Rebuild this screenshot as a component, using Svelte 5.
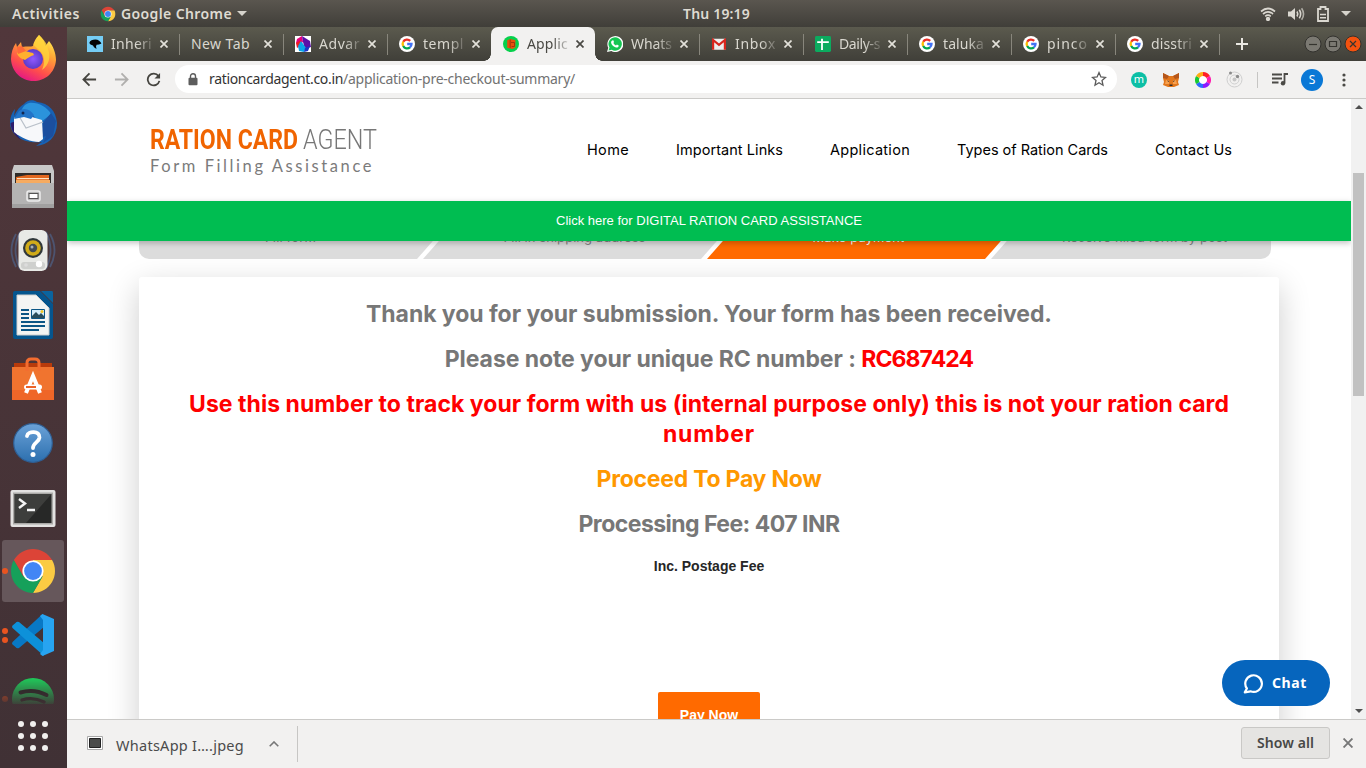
<script>
  // Sets a text to a fixed advance width, by tracking or by condensing its glyphs.
  function fit(node, opts) {
    const width = typeof opts === 'number' ? opts : opts.width;
    const natural = node.getBoundingClientRect().width;
    if (opts.condense) {
      node.style.transform = `scaleX(${width / natural})`;
      node.style.marginRight = `${width - natural}px`;
    } else {
      const count = node.textContent.trim().length;
      node.style.letterSpacing = `${(width - natural) / count}px`;
    }
  }

  const tabs = [
    { title: 'Inheri', icon: 'bird' },
    { title: 'New Tab', icon: null },
    { title: 'Advar', icon: 'prism' },
    { title: 'templ', icon: 'google' },
    { title: 'Applic', icon: 'ration', active: true },
    { title: 'Whats', icon: 'whatsapp' },
    { title: 'Inbox', icon: 'gmail' },
    { title: 'Daily-s', icon: 'sheet' },
    { title: 'taluka', icon: 'google' },
    { title: 'pinco', icon: 'google' },
    { title: 'disstri', icon: 'google' }
  ];

  const dock = [
    { name: 'firefox', dots: 0 },
    { name: 'thunderbird', dots: 0 },
    { name: 'files', dots: 0 },
    { name: 'rhythmbox', dots: 0 },
    { name: 'writer', dots: 0 },
    { name: 'software', dots: 0 },
    { name: 'help', dots: 0 },
    { name: 'terminal', dots: 0 },
    { name: 'chrome', dots: 1, active: true },
    { name: 'code', dots: 2 },
    { name: 'spotify', dots: 1 }
  ];

  const links = [
    { label: 'Home', width: 42 },
    { label: 'Important Links', width: 107 },
    { label: 'Application', width: 80 },
    { label: 'Types of Ration Cards', width: 151 },
    { label: 'Contact Us', width: 77 }
  ];

  const steps = [
    { label: 'Fill form', width: 51 },
    { label: 'Fill in shipping address', width: 142 },
    { label: 'Make payment', width: 92, current: true },
    { label: 'Receive filled form by post', width: 165 }
  ];
</script>

{#snippet chromeLogo()}
  <path fill="#fbcb43" d="M24 13H43.05A22 22 0 0 1 24 46L33.53 29.5L24 24Z" />
  <path fill="#16a05a" d="M24 46A22 22 0 0 1 4.95 13L14.47 29.5L24 24L33.53 29.5Z" />
  <path fill="#dc4437" d="M4.95 13A22 22 0 0 1 43.05 13H24V24L14.47 29.5Z" />
  <circle cx="24" cy="24" r="10.6" fill="#fff" />
  <circle cx="24" cy="24" r="8.9" fill="#4286f5" />
{/snippet}

{#snippet favicon(name)}
  <svg class="fav" viewBox="0 0 16 16">
    {#if name === 'google'}
      <circle cx="8" cy="8" r="8" fill="#fff" />
      <g fill="none" stroke-width="2.3">
        <path stroke="#ea2f25" d="M4.2 5.8A4.4 4.4 0 0 1 11.2 4.9" />
        <path stroke="#fbbc05" d="M4.2 10.1A4.6 4.6 0 0 1 4.2 5.8" />
        <path stroke="#00a650" d="M11 11.4A4.5 4.5 0 0 1 4.2 10" />
        <path stroke="#4272f5" d="M8.2 8H12.5A4.4 4.4 0 0 1 10.9 11.4" />
      </g>
    {:else if name === 'bird'}
      <path fill="#75cdf5" d="M0 0H16V16H0Z" />
      <path fill="#050505" d="M2.3 7C3 4.500 6 3.500 8.500 3.600C11 3.800 13.600 5.200 14.400 7.600L12 8.600L9.600 8.800L9 10.500L9.500 13L7 11.300L6 9.400L3.500 8.600Z" />
    {:else if name === 'prism'}
      <path fill="#fff" d="M0 0H16V16H0Z" />
      <path fill="#e6007e" d="M2 3L7 0L8 6L4 9L1 7Z" />
      <path fill="#5a0fa8" d="M7 0L15 5L16 11L10 13L8 6Z" />
      <path fill="#ec1c24" d="M1 7L6 4L5 10L2 12Z" />
      <path fill="#0aa4e8" d="M6 5L11 12L9 16L4 15L3 10Z" />
      <path fill="#1d35c6" d="M10 12L15 10L13 15L9 16Z" />
    {:else if name === 'ration'}
      <circle cx="8" cy="8" r="8" fill="#06d14c" />
      <path fill="#e8500d" d="M4.2 4.3L7.4 3L12.4 4.3V11.3L9.6 13.1L4.2 11.7Z" />
      <path fill="none" stroke="#8f320d" stroke-width=".8" d="M7.2 3.5V11.8M8 6.5H11.5V10.5H8.6" />
    {:else if name === 'whatsapp'}
      <path fill="#fff" d="M0 16L1.3 11.8A8 8 0 1 1 4.4 15Z" />
      <path fill="#16c653" d="M1.5 14.5L2.5 11.6A6.7 6.7 0 1 1 4.8 13.8Z" />
      <path fill="#fff" d="M5.1 4.4L6.3 4.3L7 6.1L6.4 7.1C7 8.3 7.8 9 9 9.6L9.9 8.6L11.7 9.5C11.7 11.3 10.1 12 8.4 11.3C6.3 10.5 4.5 8.7 4.1 6.7C4 5.7 4.4 4.8 5.1 4.4Z" />
    {:else if name === 'gmail'}
      <rect x="1" y="2.7" width="14" height="11" rx="1" fill="#eee" />
      <path fill="none" stroke="#d9251d" stroke-width="2.2" d="M2.1 13.7V4L8 8.9L13.9 4V13.7" />
    {:else if name === 'sheet'}
      <rect width="16" height="16" rx="1.4" fill="#0bab5f" />
      <path fill="none" stroke="#fff" stroke-width="1.8" d="M2.2 6.2H13.8M7 2.7V14" />
    {/if}
  </svg>
{/snippet}

{#snippet dockIcon(name)}
  <svg class="app" viewBox="0 0 48 48">
    {#if name === 'firefox'}
      <defs>
        <linearGradient id="ffBody" x1=".8" y1="0" x2=".3" y2="1">
          <stop offset="0" stop-color="#fff44f" /><stop offset=".35" stop-color="#ffa436" />
          <stop offset=".7" stop-color="#ff4f4b" /><stop offset="1" stop-color="#e31587" />
        </linearGradient>
        <radialGradient id="ffGlobe"><stop offset="0" stop-color="#9059ff" /><stop offset="1" stop-color="#5b3bc9" /></radialGradient>
      </defs>
      <path fill="url(#ffBody)" d="M30 0C34 4 36 7 36.500 11L40 6C44 11 47 18 47 25C46 38 36 46 24.500 46C12 46 2.500 36 2 24C2 18 4 12 7 8L8 12L12 7L13 12C18 11 22 12 24 11C25 6 27 3 30 0Z" />
      <circle cx="24" cy="24" r="10" fill="url(#ffGlobe)" />
      <path fill="#ffb02e" d="M8 18C13 14 19 17 24 18L25 20C21 21 19 23 16 25C13 24 9 22 8 18Z" />
      <path fill="#ff6a39" d="M8 12L13 11L17 16L9 19Z" />
      <path fill="#ffd43b" d="M30 0C35 5 38 8 39 14C42 22 40 30 33 35C36 28 36 23 32 17C27 12 24 10 24.500 9Z" opacity=".8" />
    {:else if name === 'thunderbird'}
      <path fill="#1762b4" d="M15 5C18 1 24 0 28 3C40 4 47 12 48 24C48 38 39 46 27 47L33 43C15 45 2 37 1 24C1 19 3 13 6 10L5 17C8 11 11 7 15 5Z" />
      <path fill="#2b93dc" d="M20 4C29 3 38 8 42 15L31 24L22 14L12 14C13 8 16 5 20 4Z" />
      <path fill="#1b4f9f" d="M34 24L42 14L47 22L44 37L34 44L37 37L31 39Z" />
      <path fill="#2b1c6b" d="M1.500 24L7 22V34L12 41C6 37 2 31 1.500 24Z" />
      <path fill="#f7f8fa" d="M5 19L13 15L33 21L34 40L30 43C22 43 12 39 5 33Z" />
      <path fill="none" stroke="#b9c0c9" stroke-width="1.200" d="M10 17L17 29L34 23" />
      <path fill="#2374c8" d="M10 12C15 8 21 10 25 16L22 20L15 18L5 20Z" />
      <circle cx="14" cy="14" r="1.500" fill="#132650" />
    {:else if name === 'files'}
      <path fill="#c8c8c8" d="M5 2H43L45 8V22H3V8Z" />
      <path fill="#302b29" d="M6 10H42V20H6Z" />
      <path fill="#e2671f" d="M7 14L18 12L40 12V20H7Z" />
      <path fill="#ffe2c0" d="M8 15H40V16.200H8Z" />
      <path fill="#f6ab61" d="M7 17H41V20H7Z" />
      <path fill="#b4b3b3" d="M3 20H45V45H3Z" />
      <path fill="#8e8e8e" d="M3 41H45V45H3Z" opacity=".5" />
      <rect x="18" y="28" width="13" height="10" rx="2" fill="#b9b9b9" stroke="#ededed" stroke-width="1.500" />
      <rect x="20" y="30.500" width="9" height="5" fill="#fff" stroke="#555" />
    {:else if name === 'rhythmbox'}
      <g fill="none" stroke="#4d5f83" stroke-width="1.800" opacity=".75">
        <path d="M7 7Q-2 23 7 40M11 5Q2 23 11 42M41 7Q50 23 41 40M37 5Q46 23 37 42" />
      </g>
      <rect x="9.500" y="3" width="29" height="41" rx="6" fill="#e8e9e6" />
      <rect x="12" y="35" width="24" height="7" rx="3" fill="#cfd0ce" />
      <circle cx="24" cy="21" r="10" fill="#30373a" />
      <circle cx="24" cy="21" r="7.800" fill="#d0ab19" />
      <circle cx="24" cy="21" r="4.200" fill="#434b51" />
      <circle cx="23" cy="20" r="1.500" fill="#a9b2b6" />
      <circle cx="30" cy="37" r="3.200" fill="#fff" />
      <circle cx="17" cy="38" r="1.800" fill="#dcdcdc" />
    {:else if name === 'writer'}
      <path fill="#05558e" d="M6 0H31L44 13V46Q44 48 42 48H6Q4 48 4 46V2Q4 0 6 0Z" />
      <path fill="#0a649f" d="M32 0H43Q44 0 44 2V12Z" />
      <path fill="#f4f4f3" stroke="#cfcfcf" stroke-width="1" d="M8 4H27L40 17V44H8Z" />
      <path stroke="#0c5585" stroke-width="2" d="M12 19H20M12 23H20M12 27H20M12 31H36M12 35H36M12 39H30" />
      <path fill="#d5edfb" stroke="#0c5585" d="M22.500 18.500H35.500V27.500H22.500Z" />
      <path fill="#294c5b" d="M23 27V25L27 21L30 24L32 22L35 25V27Z" />
      <circle cx="33" cy="20.500" r="1.500" fill="#f3c624" />
    {:else if name === 'software'}
      <path fill="#b83b0b" d="M5 8H43V14H5Z" />
      <path fill="#f0742f" d="M3 12H45V45H3Z" />
      <path fill="#ef6628" d="M3 35H45V45H3Z" />
      <path fill="none" stroke="#f36d30" stroke-width="3" d="M18 16V8Q18 4 22 4H26Q30 4 30 8V16" />
      <g fill="none" stroke="#fff" stroke-width="4"><path d="M17 38L24 21L31 38" /></g>
      <rect x="15" y="29.500" width="18" height="5" rx="2.500" fill="#fff" />
      <path stroke="#ec6328" stroke-width="2" d="M17 32H27" />
    {:else if name === 'help'}
      <defs><linearGradient id="helpBlue" x2="0" y2="1"><stop stop-color="#6ba2d8" /><stop offset="1" stop-color="#2c6fae" /></linearGradient></defs>
      <circle cx="24" cy="24" r="19.300" fill="url(#helpBlue)" stroke="#2f5f94" stroke-width="1.200" />
      <path fill="none" stroke="#fff" stroke-width="3.800" stroke-linecap="round" d="M18 17C19 11.500 31 11.500 30.500 18.500C30 23.500 24 23.500 24 29" />
      <circle cx="24" cy="35.500" r="2.500" fill="#fff" />
    {:else if name === 'terminal'}
      <rect x="1.500" y="7" width="45" height="37" rx="2" fill="#e3e2e1" />
      <rect x="4" y="9.500" width="40" height="32" fill="#aaa9a7" />
      <rect x="5.500" y="11" width="37" height="29" fill="#272827" />
      <path fill="#4c4d4b" d="M5.500 11H42.500L17 40H5.500Z" opacity=".6" />
      <path fill="none" stroke="#f4f4f4" stroke-width="2.400" d="M10 16L16 20.500L10 25M18 27H26" />
    {:else if name === 'chrome'}
      {@render chromeLogo()}
    {:else if name === 'code'}
      <path fill="#0878c5" d="M3.500 31L33.500 3L35 16L10 37Q8 38 6.500 36L3.500 33.500Q2.500 32.500 3.500 31Z" />
      <path fill="#0d91d9" d="M3.500 17L35 45V32L10 11Q8 10 6.500 12L3.500 14.500Q2.500 15.500 3.500 17Z" />
      <path fill="#27a4f1" d="M33.500 3L45 8V40L33.500 45L31 43L34 39V9L31 5Z" />
    {:else if name === 'spotify'}
      <circle cx="24" cy="24" r="21" fill="#1ed05c" />
      <g fill="none" stroke="#252425" stroke-linecap="round">
        <path stroke-width="4" d="M11.500 17.500Q25 13.500 37.500 20" />
        <path stroke-width="3.300" d="M13 25Q24 21.500 35 27" />
      </g>
    {/if}
  </svg>
{/snippet}

<div class="desktop">
  <div class="topbar">
    <span class="activities"><span use:fit={68}>Activities</span></span>
    <span class="appmenu">
      <svg viewBox="0 0 48 48" width="16" height="16">{@render chromeLogo()}</svg>
      <span use:fit={111}>Google Chrome</span>
      <svg width="10" height="5" viewBox="0 0 10 5"><path fill="#d6d3cc" d="M0 0H10L5 5Z" /></svg>
    </span>
    <span class="clock"><span use:fit={67}>Thu 19:19</span></span>
    <span class="status">
      <svg width="16" height="14" viewBox="0 0 16 14" fill="none" stroke="#dad7d0" stroke-width="1.700">
        <path d="M1 4.500Q8-1.500 15 4.500" /><path d="M3 7Q8 2.700 13 7" /><path d="M5.200 9.300Q8 7 10.800 9.300" />
        <circle cx="8" cy="12" r="1.300" fill="#dad7d0" />
      </svg>
      <svg width="17" height="14" viewBox="0 0 17 14" fill="none" stroke="#dad7d0" stroke-width="1.600">
        <path fill="#dad7d0" stroke="none" d="M0 4.500H3L7 1V13L3 9.500H0Z" />
        <path d="M9 4.500Q10.500 7 9 9.500M11.300 2.800Q14 7 11.300 11.200" /><path opacity=".7" d="M13.600 1.200Q17.500 7 13.600 12.800" />
      </svg>
      <svg width="12" height="16" viewBox="0 0 12 16" fill="none" stroke="#dad7d0" stroke-width="1.800">
        <path d="M1 3H3.500V1H8.500V3H11V15H1Z" /><path stroke-width="1.500" d="M3 8.500H9M3 11.800H9" />
      </svg>
      <svg width="10" height="5" viewBox="0 0 10 5"><path fill="#d6d3cc" d="M0 0H10L5 5Z" /></svg>
    </span>
  </div>

  <div class="workspace">
    <div class="dock">
      <div class="apps">
        {#each dock as item}
          <div class="slot" class:active={item.active}>
            <div class="dots">
              {#each { length: item.dots } as _}<i></i>{/each}
            </div>
            {@render dockIcon(item.name)}
          </div>
        {/each}
      </div>
      <div class="launcher">
        {#each { length: 9 } as _}<i></i>{/each}
      </div>
    </div>

    <div class="browser">
      <div class="tabstrip">
        {#each tabs as tab}
          <div class="tab" class:active={tab.active}>
            {#if tab.icon}{@render favicon(tab.icon)}{/if}
            <span class="title" class:plain={!tab.icon}><span use:fit={tab.icon ? 41 : 59}>{tab.title}</span></span>
            <svg class="close" viewBox="0 0 8 8"><path d="M.5.5L7.500 7.500M7.500.5L.5 7.500" /></svg>
          </div>
        {/each}
        <div class="newtab">
          <svg width="12" height="12" viewBox="0 0 12 12"><path stroke="#e9e7e1" stroke-width="2" d="M0 6H12M6 0V12" /></svg>
        </div>
        <div class="controls">
          <svg viewBox="0 0 18 18"><circle cx="9" cy="9" r="8" /><path d="M5 9.500H13" /></svg>
          <svg viewBox="0 0 18 18"><circle cx="9" cy="9" r="8" /><path d="M5.500 6.500H12.500V11.500H5.500Z" /></svg>
          <svg class="quit" viewBox="0 0 18 18"><circle cx="9" cy="9" r="8" /><path d="M6 6L12 12M12 6L6 12" /></svg>
        </div>
      </div>

      <div class="toolbar">
        <div class="navbtns">
          <svg viewBox="0 0 16 16"><path d="M15 8H2M8 1.500L1.500 8L8 14.500" /></svg>
          <svg class="off" viewBox="0 0 16 16"><path d="M1 8H14M8 1.500L14.500 8L8 14.500" /></svg>
          <svg viewBox="0 0 16 16"><path d="M13.300 4.300A6.300 6.300 0 1 0 14.300 9.500" /><path fill="#45443f" stroke="none" d="M15 1V7H9Z" /></svg>
        </div>
        <div class="omnibox">
          <svg width="10" height="13" viewBox="0 0 10 13"><path fill="none" stroke="#5d5d5d" stroke-width="1.400" d="M2.500 5V3.200A2.500 2.500 0 0 1 7.500 3.200V5" /><rect x=".5" y="4.700" width="9" height="7.500" rx="1" fill="#5d5d5d" /></svg>
          <span class="url"><b use:fit={134}>rationcardagent.co.in</b><span use:fit={232}>/application-pre-checkout-summary/</span></span>
          <svg class="star" width="16" height="16" viewBox="0 0 16 16"><path fill="none" stroke="#5b5b5b" stroke-width="1.300" d="M8 1.600L9.900 6L14.500 6.400L11 9.500L12 14.200L8 11.700L4 14.200L5 9.500L1.500 6.400L6.100 6Z" /></svg>
        </div>
        <div class="extensions">
          <span class="mbadge">m</span>
          <svg width="18" height="16" viewBox="0 0 18 16">
            <path fill="#e2761b" d="M1 1L7 4H11L17 1V6L16 10L17 13L12 15H6L1 13L2 10L1 6Z" />
            <path fill="#b5561a" d="M1 1L7 4L5 7L1 6ZM17 1L11 4L13 7L17 6Z" />
            <path fill="#f7a04e" d="M4 8L7 8.500L7 12L3 12ZM14 8L11 8.500L11 12L15 12Z" />
            <path fill="#302c2b" d="M5 8.500L7 9L6.500 10ZM13 8.500L11 9L11.500 10ZM7.500 12.500H10.500V14H7.500Z" />
          </svg>
          <svg width="16" height="16" viewBox="0 0 16 16" fill="none" stroke-width="4">
            <circle cx="8" cy="8" r="5" fill="#fff" />
            <path stroke="#ff1d25" d="M8 2A6 6 0 0 1 13.200 5" /><path stroke="#ff1cae" d="M13.200 5A6 6 0 0 1 13.200 11" />
            <path stroke="#8c18ff" d="M13.200 11A6 6 0 0 1 8 14" /><path stroke="#2a6bff" d="M8 14A6 6 0 0 1 2.800 11" />
            <path stroke="#18c934" d="M2.800 11A6 6 0 0 1 2.800 5" /><path stroke="#ffab13" d="M2.800 5A6 6 0 0 1 8 2" />
          </svg>
          <svg width="17" height="17" viewBox="0 0 17 17" fill="none" stroke="#cfcfcf">
            <circle cx="8.500" cy="8.500" r="7.500" /><circle cx="8.500" cy="8.500" r="4.500" />
            <circle cx="8.500" cy="8.500" r="2" fill="#c6c6c6" stroke="none" /><circle cx="11.500" cy="5.500" r="1.700" fill="#8b8b8b" stroke="none" /><circle cx="4.500" cy="2" r="1.500" fill="#8b8b8b" stroke="none" />
          </svg>
        </div>
        <div class="menu">
          <svg width="16" height="13" viewBox="0 0 16 13"><path stroke="#4b4a46" stroke-width="1.800" d="M0 1.500H10M0 5.500H10M0 9.500H6.500M12.500 10V1H16" fill="none" /><circle cx="11" cy="10.300" r="2.200" fill="#4b4a46" /></svg>
          <span class="avatar">S</span>
          <svg width="4" height="14" viewBox="0 0 4 14" fill="#4b4a46"><circle cx="2" cy="2" r="1.600" /><circle cx="2" cy="7" r="1.600" /><circle cx="2" cy="12" r="1.600" /></svg>
        </div>
      </div>

      <div class="viewport">
        <div class="page">
          <header>
            <div class="logo">
              <div class="brand">
                <strong use:fit={{ width: 148, condense: true }}>RATION CARD</strong>
                <em use:fit={{ width: 74, condense: true }}>AGENT</em>
              </div>
              <div class="tagline"><span use:fit={224}>Form Filling Assistance</span></div>
            </div>
            <nav>
              {#each links as link}<a href="#top"><span use:fit={link.width}>{link.label}</span></a>{/each}
            </nav>
          </header>
          <div class="banner"><span use:fit={306}>Click here for DIGITAL RATION CARD ASSISTANCE</span></div>
          <div class="steps">
            {#each steps as step}
              <div class="step" class:current={step.current}><span use:fit={step.width}>{step.label}</span></div>
            {/each}
          </div>
          <main>
            <h3><span use:fit={686}>Thank you for your submission. Your form has been received.</span></h3>
            <h3><span use:fit={411}>Please note your unique RC number :</span> <span class="red" use:fit={112}>RC687424</span></h3>
            <h3 class="red"><span use:fit={1040}>Use this number to track your form with us (internal purpose only) this is not your ration card</span><br /><span use:fit={92}>number</span></h3>
            <h3 class="amber"><span use:fit={225}>Proceed To Pay Now</span></h3>
            <h3><span use:fit={261}>Processing Fee: 407 INR</span></h3>
            <p>Inc. Postage Fee</p>
            <button class="pay">Pay Now</button>
          </main>
          <button class="chat">
            <svg width="21" height="21" viewBox="0 0 21 21"><path fill="none" stroke="#fff" stroke-width="2.200" stroke-linejoin="round" d="M3.900 15.500A8.300 8.300 0 1 1 7.500 18.300L1.800 19.300Z" /></svg>
            <span use:fit={35}>Chat</span>
          </button>
        </div>
        <div class="scrollbar">
          <svg viewBox="0 0 8 4"><path fill="#505050" d="M4 0L8 4H0Z" /></svg>
          <div class="thumb"></div>
          <svg viewBox="0 0 8 4"><path fill="#505050" d="M0 0H8L4 4Z" /></svg>
        </div>
      </div>

      <div class="downloads">
        <div class="file">
          <svg class="thumbnail" width="16" height="14" viewBox="0 0 16 14"><path fill="#fff" stroke="#a9a9a9" d="M.5.5H15.500V13.500H.5Z" /><path fill="#4b4c4b" stroke="#222" d="M2.500 2.500H13.500V11.500H2.500Z" /></svg>
          <span class="filename" use:fit={128}>WhatsApp I….jpeg</span>
          <svg class="chev" width="10" height="6" viewBox="0 0 10 6"><path fill="none" stroke="#777" stroke-width="1.600" d="M.7 5.300L5 1L9.300 5.300" /></svg>
        </div>
        <button class="showall"><span use:fit={57}>Show all</span></button>
        <svg class="dismiss" width="10" height="10" viewBox="0 0 9 9"><path stroke="#777" stroke-width="1.700" d="M.5.5L8.500 8.500M8.500.5L.5 8.500" /></svg>
      </div>
    </div>
  </div>
</div>

<style>
  :global(body) { overflow: hidden; }
  * { box-sizing: border-box; }
  svg { display: block; flex: none; }
  button { border: 0; padding: 0; }
  span, strong, em, b { white-space: nowrap; }
  .desktop { width: 1366px; height: 768px; display: flex; flex-direction: column; font-family: "Noto Sans", sans-serif; overflow: hidden; }

  .topbar { height: 27px; flex: none; display: grid; grid-template-columns: 100px 583px 1fr auto; align-items: center; padding-right: 15px; background: linear-gradient(#5a564f, #403e39); color: #dfdbd2; font-weight: 600; font-size: 14px; line-height: 27px; }
  .topbar span { display: inline-block; }
  .activities { padding-left: 12px; }
  .topbar .appmenu { display: flex; align-items: center; gap: 5px; }
  .topbar .status { display: flex; align-items: center; gap: 12px; }

  .workspace { flex: 1; display: flex; min-height: 0; }
  .dock { width: 67px; flex: none; display: flex; flex-direction: column; background: linear-gradient(#51373b, #403135); }
  .apps { height: 677px; display: flex; flex-direction: column; gap: 2px; padding-top: 1px; overflow: hidden; mask-image: linear-gradient(#000 96%, transparent 100.500%); }
  .slot { height: 62px; flex: none; margin: 0 3px 0 2px; display: flex; align-items: center; border-radius: 3px; }
  .slot.active { background: #66575b; }
  .dots { width: 6px; margin-right: 1px; display: flex; flex-direction: column; gap: 3px; }
  .dots i { width: 6px; height: 6px; border-radius: 50%; background: #e95420; }
  .app { width: 48px; height: 48px; }
  .launcher { display: grid; grid-template-columns: repeat(3, 6px); gap: 6px; justify-content: center; padding: 17px 1px 0 0; }
  .launcher i { width: 6px; height: 6px; border-radius: 50%; background: #f1efee; }

  .browser { flex: 1; min-width: 0; display: flex; flex-direction: column; }
  .tabstrip { height: 34px; flex: none; display: flex; padding-left: 8px; background: linear-gradient(#5b5a4e, #403f39); }
  .tab { width: 104px; flex: none; display: flex; align-items: center; padding: 0 11px 0 12px; position: relative; color: #d9d7cf; font-size: 14px; }
  .fav { width: 16px; height: 16px; margin-right: 8px; }
  .title { width: 42px; line-height: 22px; mask-image: linear-gradient(90deg, #000 60%, transparent 108%); }
  .title span { display: inline-block; }
  .title.plain { width: 66px; mask-image: none; }
  .close { width: 8px; height: 8px; margin-left: 7px; }
  .close path { stroke: #e3e1da; stroke-width: 1.700; }
  .tab:not(.active)::after { content: ""; position: absolute; right: -1px; top: 7px; width: 1px; height: 21px; background: #88867c; }
  .tab:nth-child(4)::after { display: none; }
  .tab.active { background: #f2f1f0; color: #4a4944; border-radius: 7px 7px 0 0; }
  .tab.active::before { content: ""; position: absolute; left: -7px; right: -7px; bottom: 0; height: 7px; background: radial-gradient(circle at 0 0, transparent 6.500px, #f2f1f0 7px) left / 7px 7px no-repeat, radial-gradient(circle at 100% 0, transparent 6.500px, #f2f1f0 7px) right / 7px 7px no-repeat; }
  .tab.active .close path { stroke: #4a4944; }
  .newtab { flex: 1; display: flex; align-items: center; padding-left: 17px; }
  .controls { display: flex; align-items: center; gap: 2px; padding-right: 4px; }
  .controls svg { width: 18px; height: 18px; }
  .controls circle { fill: #7b7972; stroke: #33322e; }
  .controls path { fill: none; stroke: #35342f; stroke-width: 1.200; }
  .controls .quit circle { fill: #f4520f; }

  .toolbar { height: 38px; flex: none; display: flex; align-items: center; background: #f2f1f0; border-bottom: 1px solid #cbcac8; }
  .navbtns { width: 108px; display: flex; gap: 17px; padding-left: 15px; }
  .navbtns svg { width: 15px; height: 15px; fill: none; stroke: #45443f; stroke-width: 1.900; }
  .navbtns .off { stroke: #b0afad; }
  .omnibox { width: 942px; height: 28px; margin-bottom: 1px; display: flex; align-items: center; border-radius: 14px; background: #fff; padding: 0 10px 0 13px; }
  .url { flex: 1; display: flex; padding-left: 11px; font-size: 14px; line-height: 26px; color: #727272; }
  .url b { font-weight: 400; color: #333; }
  .extensions { display: flex; align-items: center; gap: 15px; width: 127px; padding-left: 14px; }
  .mbadge { width: 16px; height: 16px; border-radius: 50%; background: #0cbfa5; color: #fff; font-size: 11px; line-height: 14px; text-align: center; }
  .menu { flex: 1; display: flex; align-items: center; height: 16px; margin-left: 13px; padding: 0 0 0 14px; border-left: 1px solid #c6c5c3; }
  .avatar { width: 22px; height: 22px; margin: 0 19px 0 13px; border-radius: 50%; background: #0a78d6; color: #fff; font-size: 12px; line-height: 22px; text-align: center; }

  .viewport { flex: 1; min-height: 0; display: flex; }
  .page { flex: 1; min-width: 0; background: #fff; position: relative; overflow: hidden; display: flex; flex-direction: column; }
  header { height: 102px; flex: none; display: flex; justify-content: space-between; align-items: center; padding: 0 119px 0 83px; background: #fff; position: relative; z-index: 2; }
  .brand { display: flex; gap: 5px; padding-top: 2px; font: 27.500px/28px Roboto, sans-serif; color: #f06400; }
  .brand strong, .brand em { transform-origin: 0 0; flex: none; }
  .brand em { font-style: normal; font-weight: 300; color: #777; }
  .tagline { font: 16.500px/22px Lato, sans-serif; color: #7b7b7b; margin: 1px 0 0; }
  .tagline span { display: inline-block; }
  nav { display: flex; gap: 47px; }
  nav a { color: #000; text-decoration: none; font: 14.500px/20px Inter, sans-serif; }
  nav span { display: inline-block; }
  .banner { height: 40px; flex: none; background: #00bd51; color: #fff; font: 13px/40px "Liberation Sans", sans-serif; text-align: center; position: relative; z-index: 2; box-shadow: 0 2px 6px rgba(0, 0, 0, .25); }
  .steps { display: flex; flex: none; width: 1132px; height: 42px; margin: -24px 0 0 72px; border-radius: 0 0 10px 10px; overflow: hidden; }
  .step { width: 315px; flex: none; padding-right: 12px; background: #dcdcdc; color: #828282; font: 13px/41px Inter, sans-serif; text-align: center; clip-path: polygon(37px 0, 100% 0, calc(100% - 37px) 100%, 0 100%); }
  .step:not(:first-child) { margin-left: -31px; }
  .step:first-child { clip-path: polygon(0 0, 100% 0, calc(100% - 37px) 100%, 0 100%); }
  .step:last-child { width: 280px; padding: 0 0 0 27px; clip-path: polygon(37px 0, 100% 0, 100% 100%, 0 100%); }
  .step.current { background: #ff6a00; color: #fff; }
  main { width: 1140px; flex: none; height: 520px; margin: 18px 0 0 72px; padding-top: 22px; background: #fff; border-radius: 3px; box-shadow: 0 10px 32px rgba(0, 0, 0, .2); text-align: center; }
  h3 { margin: 0 0 15px; font: 700 23px/30px Inter, sans-serif; color: #777; }
  h3 .red, h3.red { color: #f00; }
  h3.amber { color: #ff9800; }
  p { margin: 0; padding-top: 2px; font: bold 14px/20px "Liberation Sans", sans-serif; color: #262626; }
  .pay { margin-top: 116px; width: 102px; height: 46px; border-radius: 2px; background: #ff6a00; color: #fff; font: bold 14px/46px "Liberation Sans", sans-serif; }
  .chat { position: absolute; right: 21px; bottom: 13px; width: 108px; height: 46px; border-radius: 23px; background: #0665bd; color: #fff; display: flex; align-items: center; gap: 8px; padding-left: 21px; font: 700 14px/20px "Noto Sans", sans-serif; }
  .scrollbar { width: 15px; display: flex; flex-direction: column; align-items: center; background: #f1f1f1; padding: 6px 0; }
  .scrollbar svg { width: 8px; height: 4px; }
  .thumb { width: 11px; height: 223px; margin: 64px 0 auto; background: #c1c1c1; }

  .downloads { height: 49px; flex: none; display: flex; align-items: center; background: #f2f1f0; border-top: 1px solid #cbcac8; padding-right: 13px; color: #4b4b4b; }
  .file { width: 231px; height: 36px; display: flex; align-items: center; padding-left: 20px; border-right: 1px solid #c7c6c4; margin-right: auto; }
  .thumbnail { margin-bottom: 2px; }
  .filename { margin: 2px 25px 0 13px; font-size: 14.500px; line-height: 20px; }
  .showall { width: 89px; height: 32px; margin-bottom: 2px; border: 1px solid #c9c8c6; border-radius: 3px; background: #e5e4e2; color: #484846; font: 600 14px/20px "Noto Sans", sans-serif; }
  .dismiss { margin: 0 0 2px 13px; }
</style>
